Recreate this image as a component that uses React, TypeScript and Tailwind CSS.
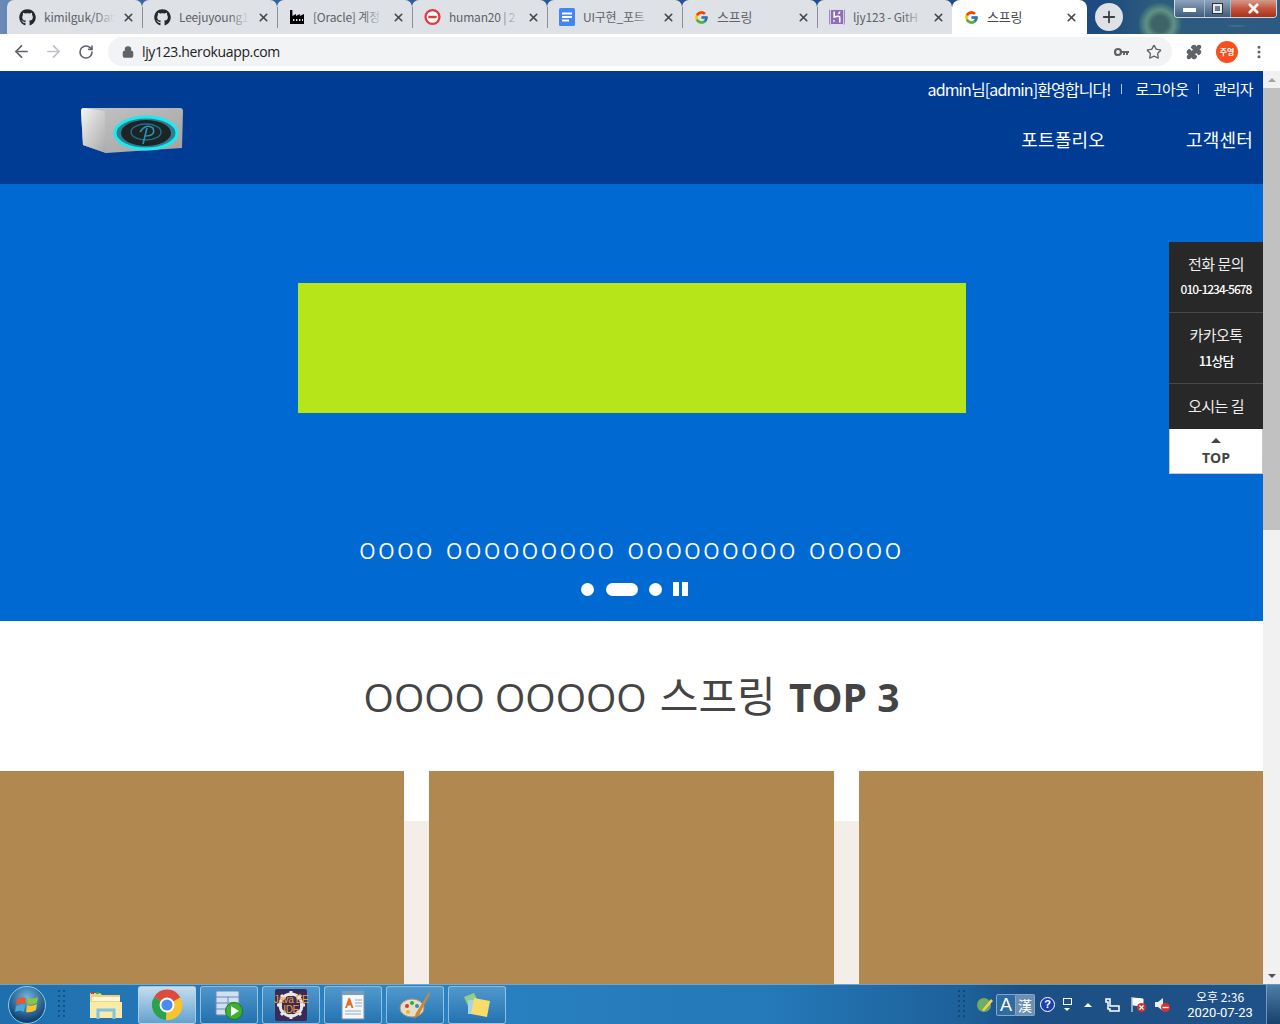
import React from "react";
import { FaGithub } from "react-icons/fa";
import { FcGoogle } from "react-icons/fc";
import { SiHeroku } from "react-icons/si";
import { ArrowLeft, ArrowRight, RotateCw, Lock, Star, X, Plus, Puzzle, MoreVertical } from "lucide-react";

const ko = "font-['Noto_Sans_CJK_KR','Noto_Sans',sans-serif]";

function Factory() {
  return (
    <svg width="16" height="16" viewBox="0 0 16 16" className="shrink-0">
      <path d="M1 1h2.4v6l3.6-2v2l3.8-2v2l4.2-2v10H1z" fill="#000" />
      <path d="M4 10h1.4v2H4zM7 10h1.4v2H7zM10 10h1.4v2H10zM13 10h1v2h-1z" fill="#dee1e6" />
    </svg>
  );
}
function Cafe() {
  return (
    <svg width="17" height="18" viewBox="0 0 18 18" className="shrink-0">
      <circle cx="9" cy="9" r="7.4" fill="#fff" stroke="#e0393e" strokeWidth="2.4" />
      <rect x="4.5" y="7.6" width="9" height="2.8" rx="1.2" fill="#e0393e" />
    </svg>
  );
}
function Docs() {
  return (
    <svg width="16" height="18" viewBox="0 0 16 18" className="shrink-0">
      <rect x="0" y="0" width="16" height="18" rx="1.5" fill="#4285f4" />
      <path d="M3 4.5h10v2H3zM3 8h10v2H3zM3 11.5h7v2H3z" fill="#fff" />
    </svg>
  );
}
function Heroku() {
  return (
    <div className="flex h-[16px] w-[16px] shrink-0 items-center justify-center rounded-[2px] bg-[#8b6fb5]">
      <SiHeroku size={16} color="#ffffff" />
    </div>
  );
}

const tabs: { icon: React.ReactNode; title: string; cjk?: boolean }[] = [
  { icon: <FaGithub size={17} color="#24292e" className="shrink-0" />, title: "kimilguk/Dat" },
  { icon: <FaGithub size={17} color="#24292e" className="shrink-0" />, title: "Leejuyoung1" },
  { icon: <Factory />, title: "[Oracle] 계정" },
  { icon: <Cafe />, title: "human20 | 2" },
  { icon: <Docs />, title: "UI구현_포트" },
  { icon: <FcGoogle size={15} className="shrink-0" />, title: "스프링", cjk: true },
  { icon: <Heroku />, title: "ljy123 - GitH" },
];

function Tab({ icon, title, active, last, cjk }: { icon: React.ReactNode; title: string; active?: boolean; last?: boolean; cjk?: boolean }) {
  return (
    <div
      className={`relative flex h-[34px] w-[135px] shrink-0 items-center pl-[12px] ${
        active ? "rounded-t-lg bg-white pr-[9px]" : "rounded-t-[7px] bg-[#dee1e6] pr-[7px]"
      }`}
    >
      {icon}
      <span className={`relative ml-[8px] w-[72px] overflow-hidden whitespace-nowrap ${cjk ? "text-[13px]" : "text-[12px]"} ${ko} tracking-[-0.2px] ${active ? "text-[#45484c]" : "text-[#5f6368]"}`}>
        {title}
        {!cjk && <span className="absolute right-[2px] top-0 h-full w-[20px] bg-gradient-to-r from-transparent to-[#dee1e6]" />}
      </span>
      <X size={13} strokeWidth={3} color="#44474b" className="ml-auto shrink-0" />
      {!active && !last && <div className="absolute right-[-1px] top-[7px] z-10 h-[21px] w-px bg-[#8b8e93]" />}
    </div>
  );
}

function WindowControls() {
  return (
    <div className="absolute left-[1174px] top-0 flex h-[18px] w-[103px] overflow-hidden rounded-b-[4px] border border-t-0 border-[#dfe6ee]/90">
      <div className="flex w-[29px] items-center justify-center bg-gradient-to-b from-[#8ea5bc] to-[#3f5c7c] pt-[3px]">
        <div className="h-[4px] w-[13px] bg-white" />
      </div>
      <div className="flex w-[27px] items-center justify-center border-x border-[#c5d0dc]/60 bg-gradient-to-b from-[#8ea5bc] to-[#3f5c7c]">
        <div className="h-[9px] w-[9px] border-2 border-[#e8e8e8] outline outline-1 outline-[#333]" />
      </div>
      <div className="flex flex-1 items-center justify-center bg-gradient-to-b from-[#d39a8e] via-[#c3553d] to-[#a83018]">
        <X size={15} strokeWidth={4.5} color="#f4f4f4" />
      </div>
    </div>
  );
}

function TabBar() {
  return (
    <div className="relative flex h-[34px] shrink-0 bg-[radial-gradient(circle_at_1160px_24px,#3f6468_0,#3f6468_8px,#5f9283_14px,transparent_22px),radial-gradient(ellipse_at_1237px_26px,#6d7258_0,#6d7258_8px,#a4a980_15px,transparent_26px),linear-gradient(90deg,#6a8ab6_0,#3b6ba6_6%,#1f4f8e_60%,#1d4a80_86%,#2c5b7c_90%,#2d5a83_100%)] pl-[7px]">
      {tabs.map((t, i) => (
        <Tab key={i} icon={t.icon} title={t.title} cjk={t.cjk} last={i === tabs.length - 1} />
      ))}
      <Tab icon={<FcGoogle size={15} className="shrink-0" />} title="스프링" active cjk />
      <div className="ml-[8px] mt-[3px] flex h-[28px] w-[28px] shrink-0 items-center justify-center rounded-full bg-[#dee1e6]">
        <Plus size={18} strokeWidth={2.4} color="#3c4043" />
      </div>
      <WindowControls />
    </div>
  );
}

function Toolbar() {
  return (
    <div className="flex h-[37px] shrink-0 items-center bg-white pb-[5px] pt-[3px]">
      <ArrowLeft size={19} strokeWidth={2.2} color="#5f6368" className="ml-[12px]" />
      <ArrowRight size={19} strokeWidth={2.2} color="#bdc1c6" className="ml-[13px]" />
      <RotateCw size={16} strokeWidth={2.4} color="#5f6368" className="ml-[15px]" />
      <div className="ml-[14px] flex h-[29px] w-[1064px] items-center rounded-full bg-[#f1f3f4] pl-[14px] pr-[10px]">
        <Lock size={12} strokeWidth={3} color="#5f6368" fill="#5f6368" />
        <span className="ml-[8px] font-['Open_Sans',sans-serif] text-[14px] tracking-[-0.35px] text-[#202124]">ljy123.herokuapp.com</span>
        <svg width="16" height="10" viewBox="0 0 16 10" className="ml-auto mr-[16px]">
          <circle cx="4" cy="5" r="3" fill="none" stroke="#5f6368" strokeWidth="2.2" />
          <path d="M7 4h8v2h-1v2h-2V6h-1v2H9V6H7z" fill="#5f6368" />
        </svg>
        <Star size={16} strokeWidth={2} color="#5f6368" />
      </div>
      <Puzzle size={16} color="#5f6368" fill="#5f6368" className="ml-[14px]" />
      <div className={`ml-[14px] flex h-[22px] w-[22px] items-center justify-center rounded-full bg-[#f4511e] text-[8px] font-bold text-white ${ko}`}>주영</div>
      <MoreVertical size={16} strokeWidth={2.6} color="#5f6368" className="ml-[13px]" />
    </div>
  );
}

function Logo() {
  return (
    <svg width="104" height="48" viewBox="0 0 104 48">
      <defs>
        <linearGradient id="lf" x1="0" y1="0" x2="1" y2="1">
          <stop offset="0" stopColor="#c4c4c4" />
          <stop offset="1" stopColor="#a2a2a2" />
        </linearGradient>
        <linearGradient id="ls" x1="0" y1="0" x2="1" y2="1">
          <stop offset="0" stopColor="#f4f4f4" />
          <stop offset="1" stopColor="#a8a8a8" />
        </linearGradient>
      </defs>
      <path d="M1 4 Q1 1 4 1 L100 1 Q103 1 103 4 L102 41 L26 46 L3 38 Z" fill="url(#lf)" />
      <path d="M1 4 Q1 1 4 1 L25 4 L26 46 L3 38 Z" fill="url(#ls)" />
      <ellipse cx="66" cy="26" rx="31" ry="16" fill="#2b7f93" stroke="#1fe8ee" strokeWidth="3" />
      <ellipse cx="66" cy="26" rx="25" ry="13" fill="#1c2426" />
      <ellipse cx="66" cy="25" rx="15" ry="8" fill="none" stroke="#1f6f87" strokeWidth="1.4" />
      <path d="M63 37 L67 21 M60 25 Q66 16 73 21 Q76 29 65 29" fill="none" stroke="#2a94b0" strokeWidth="1.6" />
    </svg>
  );
}

function Header() {
  return (
    <header className={`flex h-[113px] shrink-0 items-start justify-between bg-[#003c94] pl-[80px] pr-[10px] text-white ${ko}`}>
      <div className="mt-[36px]">
        <Logo />
      </div>
      <div className="flex flex-col items-end">
        <div className="mt-[7px] flex h-[22px] items-center text-[15px] tracking-[-0.6px]">
          <span className="text-[16px] tracking-[-0.9px]">admin님[admin]환영합니다!</span>
          <span className="ml-[10px] mr-[14px] h-[10px] w-px bg-white/70" />
          <span>로그아웃</span>
          <span className="ml-[10px] mr-[14px] h-[10px] w-px bg-white/70" />
          <span>관리자</span>
        </div>
        <nav className="mt-[26px] flex gap-[81px] text-[18px] tracking-[0.2px]">
          <span>포트폴리오</span>
          <span>고객센터</span>
        </nav>
      </div>
    </header>
  );
}

function QuickMenu() {
  return (
    <aside className={`absolute right-0 top-[58px] w-[94px] text-center text-white ${ko}`}>
      <div className="h-[71px] border-b border-[#4a4a4a] bg-[#282828] pt-[10px]">
        <div className="text-[15px] leading-[24px] tracking-[-0.5px] text-[#eeeeee]">전화 문의</div>
        <div className="mt-[3px] text-[12px] font-medium leading-[20px] tracking-[-1px]">010-1234-5678</div>
      </div>
      <div className="h-[71px] border-b border-[#4a4a4a] bg-[#282828] pt-[10px]">
        <div className="text-[15px] leading-[24px] tracking-[-0.5px] text-[#eeeeee]">카카오톡</div>
        <div className="mt-[4px] text-[13px] font-medium leading-[20px] tracking-[-1px]">11상담</div>
      </div>
      <div className="h-[45px] bg-[#282828] pt-[10px] text-[15px] leading-[24px] tracking-[-0.5px] text-[#eeeeee]">오시는 길</div>
      <div className="flex h-[45px] flex-col items-center border border-t-0 border-[#c8c8c8] bg-white pt-[9px] text-[#444]">
        <div className="h-0 w-0 border-x-[5px] border-b-[5px] border-x-transparent border-b-[#444]" />
        <div className="mt-[5px] font-['Open_Sans',sans-serif] text-[14px] font-bold leading-[20px]">TOP</div>
      </div>
    </aside>
  );
}

function Hero() {
  return (
    <section className="relative flex h-[437px] shrink-0 flex-col items-center bg-[#0069d2] pt-[99px] text-white">
      <div className="h-[130px] w-[668px] bg-[#b6e619]" />
      <div className="mt-[120px] whitespace-nowrap font-['Open_Sans',sans-serif] text-[21px] leading-[36px] tracking-[2.6px] [word-spacing:3px]">OOOO OOOOOOOOO OOOOOOOOO OOOOO</div>
      <div className="ml-[6px] mt-[13px] flex items-center">
        <div className="h-[13px] w-[13px] rounded-full bg-white" />
        <div className="ml-[12px] h-[13px] w-[32px] rounded-full bg-white" />
        <div className="ml-[11px] h-[13px] w-[13px] rounded-full bg-white" />
        <div className="ml-[11px] flex gap-[3px]">
          <div className="h-[14px] w-[6px] bg-white" />
          <div className="h-[14px] w-[6px] bg-white" />
        </div>
      </div>
      <QuickMenu />
    </section>
  );
}

function Scrollbar() {
  return (
    <div className="flex w-[17px] shrink-0 flex-col bg-[#f1f1f1]">
      <div className="flex h-[17px] items-center justify-center">
        <div className="h-0 w-0 border-x-[4px] border-b-[4px] border-x-transparent border-b-[#a3a3a3]" />
      </div>
      <div className="h-[442px] bg-[#c1c1c1]" />
      <div className="mt-auto flex h-[17px] items-center justify-center">
        <div className="h-0 w-0 border-x-[4px] border-t-[4px] border-x-transparent border-t-[#505050]" />
      </div>
    </div>
  );
}

function Page() {
  return (
    <div className="flex h-[913px] shrink-0 overflow-hidden">
      <main className="min-w-0 flex-1 overflow-hidden">
        <Header />
        <Hero />
        <section className="flex h-[150px] items-start justify-center bg-white pt-[43px]">
          <h2 className="whitespace-nowrap font-['Open_Sans','Noto_Sans_CJK_KR',sans-serif] text-[39px] font-normal leading-[60px] text-[#444]">
            OOOO OOOOO <span className={`${ko} ml-[3px] text-[42px] leading-[60px]`}>스프링</span> <b className="ml-[3px] font-bold">TOP 3</b>
          </h2>
        </section>
        <section className="grid h-[213px] grid-cols-3 gap-[25px] bg-[linear-gradient(#ffffff_50px,#f3eee8_50px)]">
          <div className="bg-[#b08850]" />
          <div className="bg-[#b08850]" />
          <div className="bg-[#b08850]" />
        </section>
      </main>
      <Scrollbar />
    </div>
  );
}

function TaskButton({ children, active }: { children: React.ReactNode; active?: boolean }) {
  return (
    <div className={`flex h-[38px] w-[58px] shrink-0 items-center justify-center rounded-[3px] border border-[#bcd6ea]/70 ${active ? "bg-gradient-to-b from-[#d7e8f4]/90 to-[#7fb4d8]/70" : "bg-gradient-to-b from-[#6aa9d6]/60 to-[#1f6aa5]/60"}`}>
      {children}
    </div>
  );
}

function Dots() {
  return (
    <div className="grid h-[30px] w-[8px] shrink-0 grid-cols-2 grid-rows-6 gap-[1px] opacity-50">
      {Array.from({ length: 12 }).map((_, i) => (
        <div key={i} className="h-[2px] w-[2px] bg-[#0c2f52]" />
      ))}
    </div>
  );
}

function Taskbar() {
  return (
    <div className="flex h-[40px] shrink-0 items-center border-t border-[#9fc4e0]/60 bg-[linear-gradient(90deg,#1f6fae_0,#2b83c3_30%,#2479b8_60%,#1d5f99_76%,#1c4f83_80%,#1f5289_100%)] text-white">
      <div className="ml-[8px] flex h-[38px] w-[38px] shrink-0 items-center justify-center rounded-full border border-[#7fd0ee] bg-[radial-gradient(circle_at_50%_30%,#6fb7de,#113f70_75%)]">
        <svg width="24" height="22" viewBox="0 0 24 22">
          <path d="M2 5 Q6 2 11 4 L10 10 Q6 8 1 11Z" fill="#e8582c" />
          <path d="M13 4 Q18 6 23 3 L22 9 Q17 12 12 10Z" fill="#8cc63f" />
          <path d="M1 12 Q6 9 10 11 L9 18 Q5 15 0 18Z" fill="#4aa8e0" />
          <path d="M12 11 Q17 13 22 10 L21 16 Q16 19 11 18Z" fill="#f7c42f" />
        </svg>
      </div>
      <div className="ml-[12px]">
        <Dots />
      </div>
      <div className="ml-[23px] mr-[15px] shrink-0">
        <svg width="34" height="30" viewBox="0 0 34 30">
          <path d="M1 3h10l2 2h18v22H1z" fill="#f1d37a" />
          <path d="M3 7h28v4H3z" fill="#fdf6d8" />
          <rect x="2" y="2" width="3" height="2" fill="#d33" />
          <rect x="7" y="2" width="3" height="2" fill="#3a3" />
          <path d="M1 12h32v16H1z" fill="#fbe9a8" />
          <path d="M9 29V20h16v9" fill="none" stroke="#7cc4e8" strokeWidth="3" />
        </svg>
      </div>
      <div className="flex gap-[4px]">
        <TaskButton active>
          <svg width="32" height="32" viewBox="0 0 30 30">
            <path d="M15 15 L27.5 8 A14 14 0 0 0 3 7.5 Z" fill="#dd4b3e" />
            <path d="M15 15 L3 7.5 A14 14 0 0 0 14 29 Z" fill="#2ba24c" />
            <path d="M15 15 L14 29 A14 14 0 0 0 27.5 8 Z" fill="#f7c42f" />
            <circle cx="15" cy="15" r="7" fill="#fff" />
            <circle cx="15" cy="15" r="5.2" fill="#4a8bf0" />
          </svg>
        </TaskButton>
        <TaskButton>
          <svg width="30" height="30" viewBox="0 0 30 30">
            <rect x="2" y="1" width="23" height="24" rx="1" fill="#cfe0f2" stroke="#6d8ab0" />
            <path d="M2 7h23M2 13h23M2 19h23M14 7v18" stroke="#6d8ab0" fill="none" />
            <circle cx="20" cy="21" r="8.5" fill="#3cb02f" stroke="#207a18" />
            <path d="M17 16l8 5-8 5z" fill="#fff" />
          </svg>
        </TaskButton>
        <TaskButton>
          <div className="relative flex h-[32px] w-[32px] items-center justify-center rounded-[2px] bg-[#3a2a5a]">
            <svg width="30" height="30" viewBox="0 0 30 30" className="absolute left-[1px] top-[1px]">
              <circle cx="15" cy="15" r="11" fill="none" stroke="#e8e8e8" strokeWidth="3" />
              <path d="M15 1v5M15 24v5M1 15h5M24 15h5M5 5l4 4M21 21l4 4M25 5l-4 4M9 21l-4 4" stroke="#e8e8e8" strokeWidth="3" />
            </svg>
            <div className="relative flex flex-col items-center whitespace-nowrap font-['Liberation_Sans',sans-serif] text-[10px] leading-[10px] tracking-[-0.4px] text-[#f0a030]">
              <span>Java EE</span>
              <span>IDE</span>
            </div>
          </div>
        </TaskButton>
        <TaskButton>
          <svg width="24" height="30" viewBox="0 0 24 30">
            <rect x="1" y="1" width="22" height="28" fill="#f3f6fa" stroke="#7f93aa" />
            <rect x="1" y="1" width="22" height="4" fill="#7d9cc2" />
            <path d="M14 10h7M14 13h7M14 16h7M4 21h16M4 24h16" stroke="#9ab" fill="none" />
            <path d="M4 18l3.5-10h1.5L12.5 18h-2l-.8-2.5H6.8L6 18z" fill="#d9722a" />
          </svg>
        </TaskButton>
        <TaskButton>
          <svg width="32" height="32" viewBox="0 0 32 32">
            <ellipse cx="13" cy="19" rx="12" ry="9" fill="#e6ddc6" stroke="#a89a7a" />
            <circle cx="8" cy="17" r="2" fill="#d33" />
            <circle cx="13" cy="14" r="2" fill="#3a3" />
            <circle cx="18" cy="17" r="2" fill="#38c" />
            <circle cx="9" cy="23" r="2" fill="#db3" />
            <path d="M30 3 L17 24 L15 30 L20 26 L31 5z" fill="#c98a3a" />
          </svg>
        </TaskButton>
        <TaskButton>
          <svg width="32" height="28" viewBox="0 0 32 28">
            <path d="M3 6 L13 2 L18 12 L8 17z" fill="#8fd08a" />
            <path d="M7 9h13v14H7z" fill="#a7d3ea" />
            <path d="M13 7 L29 10 L26 26 L10 23z" fill="#f7dc6a" />
          </svg>
        </TaskButton>
      </div>
      <div className="ml-auto flex h-full items-center">
        <div className="mr-[10px]">
          <Dots />
        </div>
        <svg width="18" height="18" viewBox="0 0 18 18">
          <circle cx="8" cy="9" r="7" fill="#6fae5f" />
          <path d="M6 14 L15 3 L17 5 L8 15z" fill="#f0d060" />
        </svg>
        <div className="ml-[2px] flex h-[22px]">
          <div className="flex w-[20px] items-center justify-center rounded-l-[2px] border border-[#7fa8cc] bg-[#2e6ba0] font-['Liberation_Sans',sans-serif] text-[18px] leading-none">A</div>
          <div className={`flex w-[19px] items-center justify-center rounded-r-[2px] border border-l-0 border-[#7fa8cc] bg-[#6d8fb0] text-[14px] leading-none ${ko}`}>漢</div>
        </div>
        <div className="ml-[5px] flex h-[15px] w-[15px] items-center justify-center rounded-full border border-white bg-[#1b3fb0] font-['Liberation_Sans',sans-serif] text-[11px] font-bold leading-none">?</div>
        <div className="ml-[7px] flex w-[10px] flex-col items-center gap-[3px]">
          <div className="h-[7px] w-[9px] border border-white" />
          <div className="h-0 w-0 border-x-[3px] border-t-[3px] border-x-transparent border-t-white" />
        </div>
        <div className="ml-[12px] h-0 w-0 border-x-[4px] border-b-[4px] border-x-transparent border-b-white" />
        <svg width="16" height="16" viewBox="0 0 16 16" className="ml-[13px]">
          <path d="M1 2h4v7h9v5H5v-2H3V5H1z" fill="none" stroke="#fff" strokeWidth="1.5" />
        </svg>
        <svg width="17" height="17" viewBox="0 0 17 17" className="ml-[9px]">
          <path d="M2 1v15M3 2 L13 3 L13 10 L3 9z" fill="#fff" stroke="#fff" />
          <circle cx="11.5" cy="11.5" r="4.5" fill="#d8302a" />
          <path d="M9.5 9.5l4 4m0-4l-4 4" stroke="#fff" strokeWidth="1.2" />
        </svg>
        <svg width="17" height="17" viewBox="0 0 17 17" className="ml-[7px]">
          <path d="M1 6h3l5-4v13l-5-4H1z" fill="#eee" />
          <circle cx="11.5" cy="11.5" r="4.5" fill="#d8302a" />
          <path d="M8.5 11.5h6" stroke="#fff" strokeWidth="1.4" />
        </svg>
        <div className={`ml-[13px] flex w-[72px] flex-col items-center text-[13px] leading-[16px] ${ko}`}>
          <span className="text-[12px]">오후 2:36</span>
          <span className="font-['Roboto',sans-serif]">2020-07-23</span>
        </div>
        <div className="ml-[10px] h-full w-[14px] border-l border-[#8fb2d0]/70 bg-gradient-to-b from-[#4d7fa8] to-[#17406d]" />
      </div>
    </div>
  );
}

export default function App() {
  return (
    <div className="flex h-[1024px] w-[1280px] flex-col overflow-hidden">
      <TabBar />
      <Toolbar />
      <Page />
      <Taskbar />
    </div>
  );
}
